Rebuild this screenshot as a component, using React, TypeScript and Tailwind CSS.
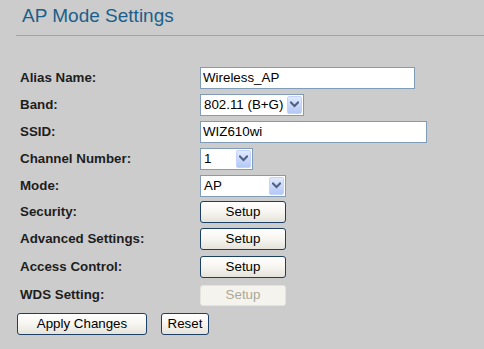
import type { ReactNode } from 'react';

const font = { fontFamily: '"Liberation Sans", Arial, sans-serif' };

function Chevron() {
  return (
    <svg width="9" height="7" viewBox="0 0 9 7" fill="none">
      <path d="M1 1.5 L4.5 5 L8 1.5" stroke="#4d6185" strokeWidth={2} strokeLinecap="square" />
    </svg>
  );
}

function TextBox({ value, width }: { value: string; width: string }) {
  return (
    <div className={`${width} h-[22px] bg-white border border-[#7f9db9] flex items-center pl-[2px] text-[13.33px] text-black`}>
      {value}
    </div>
  );
}

function Select({ value, width }: { value: string; width: string }) {
  return (
    <div className={`${width} h-[22px] bg-white border border-[#7f9db9] flex items-center p-px`}>
      <span className="flex-1 pl-[2px] text-[13.33px] text-black">{value}</span>
      <span className="w-[15px] h-full rounded-[2px] border border-[#c3d3fd] bg-gradient-to-b from-[#e1eafe] to-[#b4c8f5] flex items-center justify-center">
        <Chevron />
      </span>
    </div>
  );
}

function XpButton({ children, width, disabled }: { children: ReactNode; width: string; disabled?: boolean }) {
  if (disabled) {
    return (
      <div className={`${width} h-[21px] rounded-[3px] border border-[#e6e4da] bg-[#f4f3ee] flex items-center justify-center text-[13.33px] text-[#aca899]`}>
        {children}
      </div>
    );
  }
  return (
    <div className={`${width} h-[22px] rounded-[3px] border border-[#1c3f66] bg-gradient-to-b from-white via-[#f6f5f0] to-[#e5e3da] flex items-center justify-center text-[13.33px] text-black`}>
      {children}
    </div>
  );
}

function Row({ label, h, children }: { label: string; h: string; children: ReactNode }) {
  return (
    <div className={`flex items-center ${h}`}>
      <div className="w-[200px] pl-[20px] text-[13.33px] font-bold text-[#1e1e1e]">{label}</div>
      <div>{children}</div>
    </div>
  );
}

export default function App() {
  return (
    <div style={font} className="w-[484px] h-[349px] bg-[#cccccc] overflow-hidden">
      <div className="pl-[22px] pt-[3px] h-[35px] text-[19px] leading-[26px] text-[#1c5f8a]">AP Mode Settings</div>
      <div className="ml-[16px] h-px bg-[#a4a4a4]" />
      <div className="pt-[28px]">
        <Row label="Alias Name:" h="h-[27px]">
          <TextBox value="Wireless_AP" width="w-[215px]" />
        </Row>
        <Row label="Band:" h="h-[27px]">
          <Select value="802.11 (B+G)" width="w-[104px]" />
        </Row>
        <Row label="SSID:" h="h-[27px]">
          <TextBox value="WIZ610wi" width="w-[227px]" />
        </Row>
        <Row label="Channel Number:" h="h-[27px]">
          <Select value="1" width="w-[53px]" />
        </Row>
        <Row label="Mode:" h="h-[27px]">
          <Select value="AP" width="w-[86px]" />
        </Row>
        <Row label="Security:" h="h-[26px]">
          <XpButton width="w-[86px]">Setup</XpButton>
        </Row>
        <Row label="Advanced Settings:" h="h-[28px]">
          <XpButton width="w-[86px]">Setup</XpButton>
        </Row>
        <Row label="Access Control:" h="h-[28px]">
          <XpButton width="w-[86px]">Setup</XpButton>
        </Row>
        <Row label="WDS Setting:" h="h-[28px]">
          <XpButton width="w-[86px]" disabled>Setup</XpButton>
        </Row>
        <div className="flex items-center h-[29px] pl-[17px] gap-[14px]">
          <XpButton width="w-[130px]">Apply Changes</XpButton>
          <XpButton width="w-[48px]">Reset</XpButton>
        </div>
      </div>
    </div>
  );
}
